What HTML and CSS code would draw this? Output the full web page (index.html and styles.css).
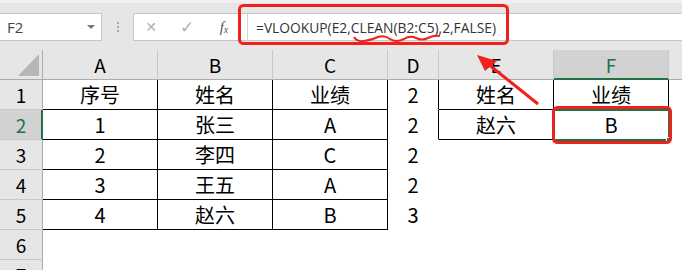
FILE: index.html
```html
<!DOCTYPE html>
<html lang="zh">
<head>
<meta charset="utf-8">
<link rel="stylesheet" href="styles.css">
</head>
<body>
<div class="app">
  <div class="toolbar">
    <div class="namebox"><span class="name">F2</span><span class="dd"></span></div>
    <div class="dots"><i></i><i></i><i></i></div>
    <div class="fbar">
      <span class="ficon x">✕</span>
      <span class="ficon ok">✓</span>
      <span class="ficon fx">f<sub>x</sub></span>
      <div class="finput">=VLOOKUP(E2,CLEAN(B2:C5),2,FALSE)</div>
    </div>
  </div>
  <div class="sheet">
    <div class="corner"><span class="tri"></span></div>
    <div class="ch">A</div><div class="ch">B</div><div class="ch">C</div><div class="ch">D</div><div class="ch">E</div><div class="ch sel">F</div><div class="ch rest"></div>

    <div class="rh">1</div>
    <div class="c t">序号</div><div class="c t">姓名</div><div class="c t">业绩</div><div class="c dr">2</div><div class="c t">姓名</div><div class="c t">业绩</div><div class="c"></div>

    <div class="rh sel">2</div>
    <div class="c t">1</div><div class="c t">张三</div><div class="c t">A</div><div class="c dr">2</div><div class="c t">赵六</div><div class="c t">B</div><div class="c"></div>

    <div class="rh">3</div>
    <div class="c t">2</div><div class="c t">李四</div><div class="c t">C</div><div class="c">2</div><div class="c"></div><div class="c"></div><div class="c"></div>

    <div class="rh">4</div>
    <div class="c t">3</div><div class="c t">王五</div><div class="c t">A</div><div class="c">2</div><div class="c"></div><div class="c"></div><div class="c"></div>

    <div class="rh">5</div>
    <div class="c t">4</div><div class="c t">赵六</div><div class="c t">B</div><div class="c">3</div><div class="c"></div><div class="c"></div><div class="c"></div>

    <div class="rh">6</div>
    <div class="c"></div><div class="c"></div><div class="c"></div><div class="c"></div><div class="c"></div><div class="c"></div><div class="c"></div>

    <div class="rh">7</div>
    <div class="c"></div><div class="c"></div><div class="c"></div><div class="c"></div><div class="c"></div><div class="c"></div><div class="c"></div>

    <div class="selbox"><span class="handle"></span></div>
  </div>
  <svg class="annot" width="682" height="270" viewBox="0 0 682 270">
    <rect x="239.5" y="5.5" width="268" height="38" rx="4" ry="4" fill="none" stroke="#f0211d" stroke-width="3"/>
    <path d="M354,37 Q357,42 364,41 Q372,40 378,37 Q384,35 390,39 Q396,43 404,39 Q410,35 416,38 Q422,41 428,38 Q434,35 440,36" fill="none" stroke="#f0211d" stroke-width="2"/>
    <rect x="553.5" y="107.5" width="117" height="35" rx="4" ry="4" fill="none" stroke="#f0211d" stroke-width="3"/>
    <line x1="538" y1="104" x2="488" y2="64" stroke="#f0211d" stroke-width="3"/>
    <polygon points="477,55 497,61 485,71" fill="#f0211d"/>
  </svg>
</div>
</body>
</html>
```

FILE: styles.css
```css
* { box-sizing: border-box; }
html, body { margin: 0; padding: 0; background: #fff; }
.app {
  position: relative;
  width: 682px;
  height: 270px;
  overflow: hidden;
  font-family: "Noto Sans CJK SC", "Noto Sans", sans-serif;
}
.toolbar {
  height: 50px;
  background: #e6e6e6;
  border-top: 3px solid #efefef;
  display: flex;
  align-items: flex-start;
  padding-top: 10px;
}
.namebox {
  width: 102px;
  height: 28px;
  background: #fff;
  border: 1px solid #c6c6c6;
  border-left: none;
  display: flex;
  align-items: center;
  padding-left: 7px;
  position: relative;
}
.name {
  font-family: "Open Sans", "Noto Sans", sans-serif;
  font-size: 15px;
  color: #444;
  flex: 1;
}
.dd {
  width: 0; height: 0;
  border-left: 4px solid transparent;
  border-right: 4px solid transparent;
  border-top: 4px solid #777;
  margin-right: 6px;
}
.dots {
  width: 31px;
  height: 28px;
  display: flex;
  flex-direction: column;
  align-items: center;
  justify-content: center;
  gap: 2px;
}
.dots i {
  width: 2px; height: 2px; background: #a8a8a8; display: block;
}
.fbar {
  flex: 1;
  height: 28px;
  background: #fff;
  border: 1px solid #c6c6c6;
  border-right: none;
  display: flex;
  align-items: center;
}
.ficon {
  color: #b0b0b0;
  font-family: "DejaVu Sans", sans-serif;
  font-size: 15px;
  text-align: center;
}
.ficon.x { width: 34px; font-size: 14px; }
.ficon.ok { width: 38px; font-size: 17px; }
.ficon.fx {
  width: 36px;
  color: #555;
  font-family: "Liberation Serif", serif;
  font-style: italic;
  font-size: 15px;
}
.ficon.fx sub { font-size: 10px; vertical-align: -1px; }
.finput {
  flex: 1;
  height: 100%;
  border-left: 1px solid #d4d4d4;
  margin-left: 5px;
  padding-left: 8px;
  display: flex;
  align-items: center;
  font-family: "Open Sans", "Noto Sans", sans-serif;
  font-size: 13.8px;
  color: #333;
  white-space: nowrap;
}
.sheet {
  position: relative;
  display: grid;
  grid-template-columns: 43px 115px 115px 115px 51px 115px 115px 1fr;
  grid-auto-rows: 30px;
}
.corner, .ch, .rh {
  background: #e6e6e6;
}
.corner {
  border-right: 1px solid #ababab;
  border-bottom: 1px solid #ababab;
  position: relative;
}
.tri {
  position: absolute;
  right: 3px;
  bottom: 3px;
  width: 0; height: 0;
  border-left: 21px solid transparent;
  border-bottom: 22px solid #b7b7b7;
}
.ch {
  border-right: 1px solid #c8c8c8;
  border-bottom: 1px solid #ababab;
  display: flex;
  align-items: center;
  justify-content: center;
  font-size: 19px;
  color: #000;
  padding-bottom: 1px;
}
.ch.sel {
  background: #d2d2d2;
  color: #217346;
  border-bottom: 2px solid #217346;
  padding-bottom: 0;
}
.ch.rest { border-right: none; }
.rh {
  border-right: 1px solid #ababab;
  border-bottom: 1px solid #c8c8c8;
  display: flex;
  align-items: center;
  justify-content: center;
  font-size: 19px;
  color: #000;
}
.rh.sel {
  background: #d2d2d2;
  color: #217346;
  border-right: 2px solid #217346;
  padding-left: 1px;
}
.c {
  border-right: 1px solid transparent;
  border-bottom: 1px solid transparent;
  display: flex;
  align-items: center;
  justify-content: center;
  font-size: 20px;
  color: #000;
  line-height: 1;
}
.c.t { border-right-color: #000; border-bottom-color: #000; }
.c.dr { border-right-color: #000; }
.selbox {
  position: absolute;
  left: 553px;
  top: 59px;
  width: 117px;
  height: 32px;
  border: 2px solid #217346;
}
.handle {
  position: absolute;
  right: -4px;
  bottom: -4px;
  width: 6px;
  height: 6px;
  background: #217346;
  border: 1px solid #fff;
}
.annot {
  position: absolute;
  left: 0;
  top: 0;
  pointer-events: none;
}
```
